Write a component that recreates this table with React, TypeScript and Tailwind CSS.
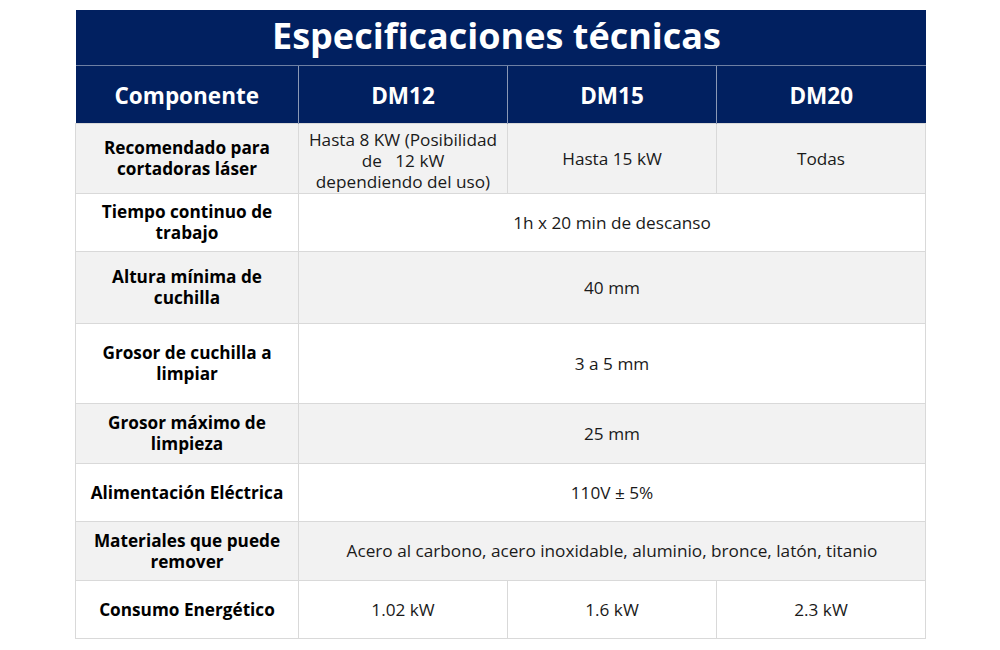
import React from "react";

const rows: { label: string[]; cells: string[][]; h: number; gray: boolean }[] = [
  { label: ["Recomendado para", "cortadoras láser"], cells: [["Hasta 8 KW (Posibilidad", "de\u00a0\u00a0\u00a012 kW", "dependiendo del uso)"], ["Hasta 15 kW"], ["Todas"]], h: 70, gray: true },
  { label: ["Tiempo continuo de", "trabajo"], cells: [["1h x 20 min de descanso"]], h: 58, gray: false },
  { label: ["Altura mínima de", "cuchilla"], cells: [["40 mm"]], h: 72, gray: true },
  { label: ["Grosor de cuchilla a", "limpiar"], cells: [["3 a 5 mm"]], h: 80, gray: false },
  { label: ["Grosor máximo de", "limpieza"], cells: [["25 mm"]], h: 60, gray: true },
  { label: ["Alimentación Eléctrica"], cells: [["110V ± 5%"]], h: 58, gray: false },
  { label: ["Materiales que puede", "remover"], cells: [["Acero al carbono, acero inoxidable, aluminio, bronce, latón, titanio"]], h: 59, gray: true },
  { label: ["Consumo Energético"], cells: [["1.02 kW"], ["1.6 kW"], ["2.3 kW"]], h: 58, gray: false },
];

export default function App() {
  return (
    <div className="w-[1000px] h-[650px] bg-white pt-[10px] pl-[75px]" style={{ fontFamily: '"Open Sans", sans-serif' }}>
      <table className="border-collapse table-fixed w-[850px]">
        <colgroup>
          <col className="w-[223px]" />
          <col className="w-[209px]" />
          <col className="w-[209px]" />
          <col className="w-[209px]" />
        </colgroup>
        <thead>
          <tr className="h-[55px]">
            <th colSpan={4} className="bg-[#012060] text-white text-[36px] font-bold border-b border-[#6d7fa3] text-center align-middle leading-none pb-[3px] pr-[8px]">
              Especificaciones técnicas
            </th>
          </tr>
          <tr className="h-[58px]">
            {["Componente", "DM12", "DM15", "DM20"].map((t, i) => (
              <th key={t} className={`bg-[#012060] text-white text-[22.5px] font-bold text-center align-middle pt-[3px] ${i < 3 ? "border-r border-[#8a98b5]" : ""}`}>
                {t}
              </th>
            ))}
          </tr>
        </thead>
        <tbody>
          {rows.map((r, ri) => (
            <tr key={ri} style={{ height: r.h }} className={r.gray ? "bg-[#f2f2f2]" : "bg-white"}>
              <td className="border border-[#d9d9d9] text-center align-middle font-bold text-[17.2px] leading-[21px] text-black px-1">
                {r.label.map((l, i) => (
                  <div key={i}>{l}</div>
                ))}
              </td>
              {r.cells.length === 1 ? (
                <td colSpan={3} className="border border-[#d9d9d9] text-center align-middle text-[17.2px] leading-[21px] text-[#1a1a1a]">
                  {r.cells[0].map((l, i) => (
                    <div key={i}>{l}</div>
                  ))}
                </td>
              ) : (
                r.cells.map((c, ci) => (
                  <td key={ci} className={`border border-[#d9d9d9] text-center align-middle text-[17.2px] leading-[21px] text-[#1a1a1a] ${c.length > 1 ? "pt-[5px]" : ""}`}>
                    {c.map((l, i) => (
                      <div key={i} className="whitespace-pre">{l}</div>
                    ))}
                  </td>
                ))
              )}
            </tr>
          ))}
        </tbody>
      </table>
    </div>
  );
}
